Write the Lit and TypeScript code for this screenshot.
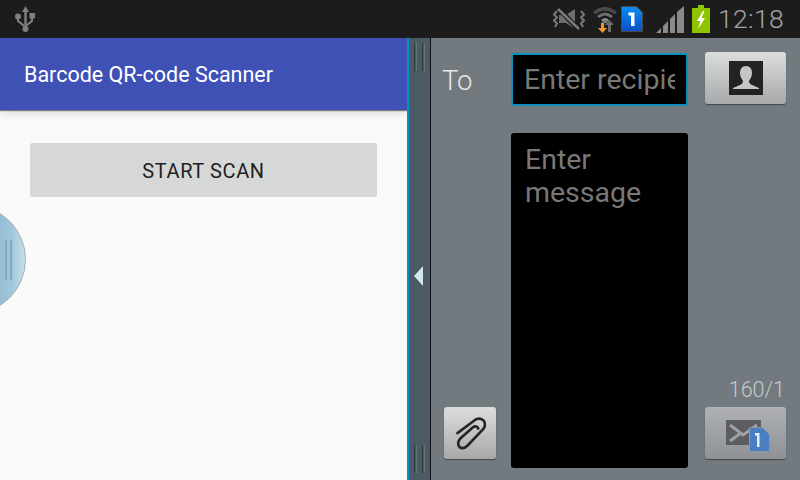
import { LitElement, html, css } from "lit";
import { customElement } from "lit/decorators.js";

@customElement("app-root")
export class AppRoot extends LitElement {
  static styles = css`
    :host { display: block; width: 800px; height: 480px; overflow: hidden; font-family: Roboto, "Liberation Sans", sans-serif; }
    svg { display: block; flex: none; }
    .status { height: 38px; background: #1c1c1c; display: flex; align-items: center; padding: 0 16px 0 15px; box-sizing: border-box; }
    .spacer { flex: 1; }
    .icons { display: flex; align-items: center; }
    .mute { margin-right: 7px; }
    .wifi { margin-right: 3px; }
    .sim { margin-right: 13px; }
    .signal { margin-right: 7px; }
    .time { font-size: 26.5px; font-weight: 300; color: #a6a6a6; margin-left: 8px; line-height: 38px; letter-spacing: 0.35px; }
    .main { height: 442px; display: flex; }
    .app { width: 407px; background: #fafafa; position: relative; overflow: hidden; display: flex; flex-direction: column; }
    .bar { height: 72px; background: #3f51b5; color: #fff; display: flex; align-items: center; padding-left: 24px; font-size: 21.5px; box-shadow: 0 1px 1px rgba(0,0,0,.45), 0 3px 9px rgba(0,0,0,.14); flex: none; }
    .scan { margin: 33px 30px 0; height: 54px; box-sizing: border-box; padding-top: 1px; background: #d6d7d7; border-radius: 2px; display: flex; align-items: center; justify-content: center; color: #1f1f1f; font-size: 20px; letter-spacing: 0.6px; }
    .knob { position: absolute; left: -83px; top: 167px; width: 109px; height: 109px; box-sizing: border-box; border-radius: 50%; border: 1.5px solid #a9adad; background: linear-gradient(90deg, #82b2cd 60%, #a0c6da 87%, #c4e0ec 100%); padding-left: 87px; display: flex; align-items: center; gap: 3px; }
    .knob i { display: block; width: 2px; height: 40px; background: #7ea9c2; }
    .handle { width: 24px; box-sizing: border-box; border-left: 2px solid #0a8fc0; border-right: 1px solid #111; background: #4b5b64; display: flex; flex-direction: column; align-items: center; justify-content: space-between; padding: 5px 0 7px; }
    .grip { display: flex; gap: 5px; }
    .grip i { display: block; width: 3px; height: 28px; box-sizing: border-box; border-left: 1px solid #2f3b42; border-right: 1px solid #66747c; }
    .arrow { width: 0; height: 0; border-style: solid; border-width: 10px 9px 10px 0; border-color: transparent #d4e6ee transparent transparent; margin: 36px 0 0 -2px; }
    .pane { flex: 1; background: #72797f; display: grid; grid-template-columns: 11px 69px 177px 17px 81px; grid-template-rows: 15px 53px 27px 1fr 54px 19px; }
    .to { grid-column: 2; grid-row: 2; color: #e4e6e7; font-size: 27.5px; font-weight: 300; display: flex; align-items: center; padding-top: 1px; }
    .recipient { grid-column: 3; grid-row: 2; background: #000; border: 2px solid #0d8fbd; border-radius: 3px; box-sizing: border-box; color: #787878; font-size: 28.5px; padding: 0 11px; line-height: 49px; overflow: hidden; white-space: nowrap; min-width: 0; }
    .recipient span { display: block; overflow: hidden; }
    .message { grid-column: 3; grid-row: 3 / span 4; margin-top: 27px; height: 335px; background: #000; border-radius: 3px; color: #787878; font-size: 28.5px; line-height: 33px; padding: 10px 14px; box-sizing: border-box; }
    .btn { border-radius: 3px; background: linear-gradient(#dcdddd, #a7a8a9); box-shadow: 0 1px 1px #3f464b; display: flex; align-items: center; justify-content: center; box-sizing: border-box; }
    .contact { grid-column: 5; grid-row: 2; height: 52px; margin-top: -1px; }
    .attach { grid-column: 2; grid-row: 5; width: 52px; height: 52px; margin-left: 2px; }
    .clip { margin-left: 3px; }
    .send { grid-column: 5; grid-row: 5; height: 52px; background: linear-gradient(#afb1b4, #8f9295); }
    .mail { margin: 5px 0 0 4px; }
    .count { grid-column: 5; grid-row: 4; align-self: end; text-align: right; color: #c6c9cb; font-size: 21.5px; font-weight: 300; padding-right: 1px; margin-bottom: 5px; line-height: 24px; }
  `;

  render() {
    return html`
      <div class="status">
        <svg width="21" height="26" viewBox="0 0 21 26" fill="#7f7f7f">
          <path d="M10.5 0l3.5 6h-2.3v15h-2.4V6H7z"/>
          <circle cx="3" cy="10.5" r="3"/>
          <rect x="14.5" y="7" width="5.5" height="5.500"/>
          <path d="M2 13h2v1.500l5.500 4.500v2.600L2 15.500zM16 12h2v3.500l-7 5.500v-2.600l5-3.900z"/>
          <circle cx="10.500" cy="23" r="3"/>
        </svg>
        <div class="spacer"></div>
        <div class="icons">
          <svg class="mute" width="32" height="22" viewBox="0 0 32 22">
            <path d="M6 7h7l9-6v20l-9-6H6z" fill="#6e6e6e"/>
            <path d="M5 0l21 22" stroke="#1c1c1c" stroke-width="5"/>
            <path d="M5 1l21 20" stroke="#7a7a7a" stroke-width="2.500"/>
            <path d="M4 3L1 6.500l3 3-3 3 3 3-2 3.500M28 3l3 3.500-3 3 3 3-3 3 2 3.500" fill="none" stroke="#7a7a7a" stroke-width="2"/>
          </svg>
          <svg class="wifi" width="26" height="28" viewBox="0 0 26 28">
            <path d="M1 7Q13 -3 25 7l-2.500 2.500Q13 2 3.500 9.500z" fill="#4a4a4a"/>
            <path d="M5 11Q13 4 21 11l-2 2Q13 8 7 13z" fill="#707070"/>
            <path d="M9 15Q13 11 17 15l-2 2Q13 15 11 17z" fill="#8a8a8a"/>
            <path d="M10 18l3-2 3 2z" fill="#8a8a8a"/>
            <path d="M9 18h3v5h3l-4.500 5-4.500-5h3z" fill="#f0962a"/>
            <path d="M17.500 15l4.500 5h-3v7h-3v-7h-3z" fill="#6b6b6b"/>
          </svg>
          <svg class="sim" width="22" height="26" viewBox="0 0 22 26">
            <defs><linearGradient id="sim" x1="0" y1="0" x2="0" y2="1"><stop offset="0" stop-color="#0a8cf0"/><stop offset="1" stop-color="#0a50c8"/></linearGradient></defs>
            <path d="M.5.500h15l6 6v19H.5z" fill="url(#sim)" stroke="#4a4a4a"/>
            <path d="M7.500 6.500h6v13.500h-3.500V9.500H7.500z" fill="#fff"/>
          </svg>
          <svg class="signal" width="29" height="27" viewBox="0 0 29 27">
            <path d="M0 27l5-5v5zM7 20l5-5v12H7zM14 13l5-5v19h-5zM21 6l7-6v27h-7z" fill="#8a8a8a"/>
          </svg>
          <svg width="18" height="28" viewBox="0 0 18 28">
            <path d="M6 0h6v3h6v25H0V3h6z" fill="#8fc500"/>
            <path d="M11 6L5 16h3.500L6 24l7-11H9.500L12.500 6z" fill="#fff"/>
          </svg>
        </div>
        <div class="time">12:18</div>
      </div>
      <div class="main">
        <div class="app">
          <div class="bar">Barcode QR-code Scanner</div>
          <div class="scan">START SCAN</div>
          <div class="knob"><i></i><i></i></div>
        </div>
        <div class="handle">
          <div class="grip"><i></i><i></i></div>
          <div class="arrow"></div>
          <div class="grip"><i></i><i></i></div>
        </div>
        <div class="pane">
          <div class="to">To</div>
          <div class="recipient"><span>Enter recipient</span></div>
          <div class="btn contact">
            <svg width="34" height="34" viewBox="0 0 34 34">
              <rect width="34" height="34" fill="#232323"/>
              <path d="M17 5c4 0 6 3 6 7 0 4-2 6-3 8 0 2 1 3 3 4l7 3v1H4v-1l7-3c2-1 3-2 3-4-1-2-3-4-3-8 0-4 2-7 6-7z" fill="#c4c5c6"/>
            </svg>
          </div>
          <div class="message">Enter<br>message</div>
          <div class="count">160/1</div>
          <div class="btn attach">
            <svg class="clip" width="35" height="38" viewBox="55 40 105 115" fill="none" stroke="#262626" stroke-width="8" stroke-linecap="round" stroke-linejoin="round">
              <path d="M65 98L118 58C132 48 150 58 148 75C147 83 142 88 135 94L95 136C85 146 72 146 68 134C65 124 70 118 76 112L112 80C118 75 126 78 128 84"/>
            </svg>
          </div>
          <div class="btn send">
            <svg class="mail" width="44" height="32" viewBox="0 0 44 32">
              <rect x="0" y="0" width="35" height="25" fill="#5b5d60"/>
              <path d="M4 5l13 10 14-10M4 21l11-8" fill="none" stroke="#a0a2a4" stroke-width="3"/>
              <path d="M23.500 7.500h13l7 7v17h-20z" fill="#4a7fc4" stroke="#8d97a3"/>
              <path d="M29 13h4.500v14h-2.500V15.500H29z" fill="#e8eef6"/>
            </svg>
          </div>
        </div>
      </div>
    `;
  }
}
